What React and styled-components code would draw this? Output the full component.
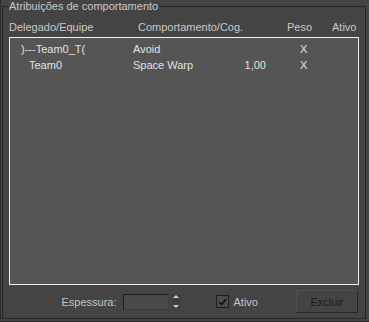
import React from 'react';
import styled, { createGlobalStyle } from 'styled-components';

const GlobalStyle = createGlobalStyle`
  html, body {
    margin: 0;
    padding: 0;
    background: #444444;
  }
  body {
    font-family: "Liberation Sans", Arial, sans-serif;
    font-size: 11px;
  }
`;

const Window = styled.div`
  width: 369px;
  height: 322px;
  box-sizing: border-box;
  background: #444444;
  border-left: 1px solid #2c2c2c;
  border-bottom: 1px solid #2c2c2c;
  padding: 0 3px 2px 1px;
`;

const Group = styled.fieldset`
  margin: 0;
  height: 319px;
  box-sizing: border-box;
  border: 1px solid #262626;
  padding: 0 6px;
  min-width: 0;
`;

const Legend = styled.legend`
  margin-left: -1px;
  padding: 0 1px;
  line-height: 13px;
  color: #c9c9c9;
`;

const Header = styled.div`
  display: grid;
  grid-template-columns: 129px 149px 45px auto;
  margin-top: 8px;
  line-height: 13px;
  color: #c9c9c9;
`;

const List = styled.div`
  margin-top: 3px;
  height: 248px;
  box-sizing: border-box;
  border: 1px solid #f2f2f2;
  background: #555555;
  padding-top: 3px;
`;

const Row = styled.div`
  display: grid;
  grid-template-columns: 123px 100px 33px auto;
  line-height: 16px;
  color: #e2e2e2;
`;

const Name = styled.span`
  padding-left: ${(p) => p.indent}px;
`;

const Weight = styled.span`
  text-align: right;
`;

const Mark = styled.span`
  padding-left: 34px;
`;

const Footer = styled.div`
  display: flex;
  align-items: center;
  justify-content: flex-end;
  height: 33px;
  color: #c4c4c4;
`;

const Label = styled.span`
  margin-right: 6px;
`;

const Field = styled.div`
  width: 46px;
  height: 16px;
  box-sizing: border-box;
  background: #4a4a4a;
  border: 1px solid #1c1c1c;
  border-right-color: #3c3c3c;
  border-bottom-color: #3c3c3c;
`;

const Spinner = styled.div`
  display: flex;
  flex-direction: column;
  justify-content: space-between;
  width: 9px;
  height: 15px;
  margin-left: 3px;
  background: #3e3e3e;
`;

const Arrow = styled.div`
  width: 0;
  height: 0;
  margin: 1px auto;
  border-left: 3px solid transparent;
  border-right: 3px solid transparent;
  ${(p) => (p.down ? 'border-top: 3px solid #d0d0d0;' : 'border-bottom: 3px solid #d0d0d0;')}
`;

const Check = styled.div`
  display: flex;
  align-items: center;
  margin-left: 35px;
`;

const Box = styled.div`
  width: 13px;
  height: 13px;
  box-sizing: border-box;
  border: 1px solid #1e1e1e;
  background: #4c4c4c;
  display: flex;
  align-items: center;
  justify-content: center;
  margin-right: 5px;
`;

const Button = styled.button`
  width: 62px;
  height: 23px;
  margin-left: 38px;
  margin-right: 1px;
  padding: 0;
  background: #444444;
  border: 1px solid #262626;
  border-top-color: #505050;
  border-left-color: #505050;
  color: #1c1c1c;
  font-family: "Liberation Sans", Arial, sans-serif;
  font-size: 11px;
`;

const rows = [
  { name: ')---Team0_T(', indent: 11, behavior: 'Avoid', weight: '', active: 'X' },
  { name: 'Team0', indent: 19, behavior: 'Space Warp', weight: '1,00', active: 'X' },
];

export default function App() {
  return (
    <Window>
      <GlobalStyle />
      <Group>
        <Legend>Atribuições de comportamento</Legend>
        <Header>
          <span>Delegado/Equipe</span>
          <span>Comportamento/Cog.</span>
          <span>Peso</span>
          <span>Ativo</span>
        </Header>
        <List>
          {rows.map((r) => (
            <Row key={r.name}>
              <Name indent={r.indent}>{r.name}</Name>
              <span>{r.behavior}</span>
              <Weight>{r.weight}</Weight>
              <Mark>{r.active}</Mark>
            </Row>
          ))}
        </List>
        <Footer>
          <Label>Espessura:</Label>
          <Field />
          <Spinner>
            <Arrow />
            <Arrow down />
          </Spinner>
          <Check>
            <Box>
              <svg width="9" height="8" viewBox="0 0 9 8">
                <path d="M1 4 L3.5 6.5 L8 1" fill="none" stroke="#111" strokeWidth="1.6" />
              </svg>
            </Box>
            <span>Ativo</span>
          </Check>
          <Button>Excluir</Button>
        </Footer>
      </Group>
    </Window>
  );
}
